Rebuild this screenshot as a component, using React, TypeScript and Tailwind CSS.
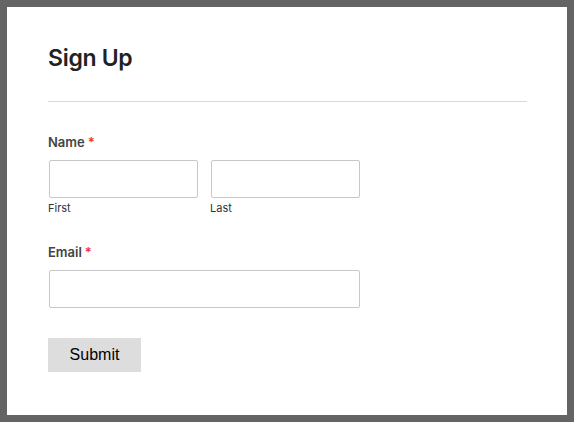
export default function App() {
  return (
    <div className="h-[422px] w-[574px] bg-[#646464] p-[7px]">
      <div className="h-full w-full bg-white pl-[41px] pr-[40px] pt-[36px] font-['Inter',sans-serif]">
        <h1 className="text-[23px] font-semibold leading-[30px] tracking-[-0.3px] text-[#222]">Sign Up</h1>
        <div className="mt-[28px] h-px w-[479px] bg-[#d9d9d9]" />

        <div className="mt-[32px]">
          <p className="text-[13px] font-semibold leading-4 text-[#444]">
            Name<span className="ml-[3px] text-[#e33]">*</span>
          </p>
          <div className="mt-[10px] flex gap-[13px]">
            <div className="flex flex-col">
              <input className="ml-px h-[38px] w-[149px] rounded-[2px] border border-[#c8c8c8] outline-none" />
              <span className="mt-[3px] text-[11px] leading-[14px] text-[#333]">First</span>
            </div>
            <div className="flex flex-col">
              <input className="h-[38px] w-[149px] rounded-[2px] border border-[#c8c8c8] outline-none" />
              <span className="-ml-px mt-[3px] text-[11px] leading-[14px] text-[#333]">Last</span>
            </div>
          </div>
        </div>

        <div className="mt-[29px]">
          <p className="text-[13px] font-semibold leading-4 text-[#444]">
            Email<span className="ml-[3px] text-[#e33]">*</span>
          </p>
          <input className="ml-px mt-[10px] block h-[38px] w-[311px] rounded-[2px] border border-[#c8c8c8] outline-none" />
        </div>

        <button className="mt-[30px] h-[34px] w-[93px] bg-[#dddddd] font-['Liberation_Sans',sans-serif] text-[16px] text-black">
          Submit
        </button>
      </div>
    </div>
  )
}
